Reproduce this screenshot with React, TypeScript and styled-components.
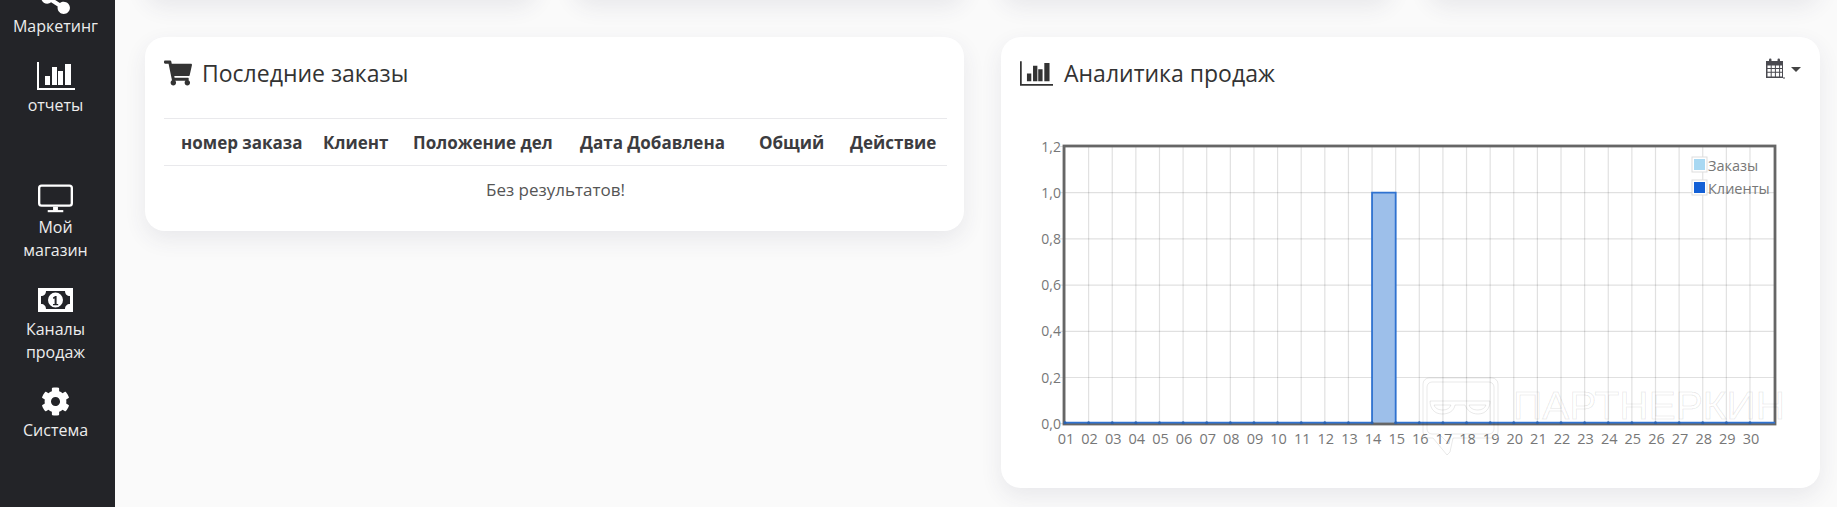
import React from 'react';
import styled, { createGlobalStyle } from 'styled-components';
import { FaCog, FaShareAlt, FaShoppingCart } from 'react-icons/fa';

const GlobalStyle = createGlobalStyle`
  html, body {
    margin: 0;
    padding: 0;
    background: #fafafa;
    font-family: "Open Sans", "Liberation Sans", sans-serif;
  }
`;

const Shell = styled.div`
  position: relative;
  display: flex;
  height: 507px;
  overflow: hidden;
`;

const Sidebar = styled.nav`
  flex: 0 0 115px;
  background: #232428;
`;

const NavList = styled.div`
  display: flex;
  flex-direction: column;
  margin-top: -17px;
  padding-right: 4px;
`;

const NavItem = styled.a<{ $top: number }>`
  display: flex;
  flex-direction: column;
  align-items: center;
  margin-top: ${({ $top }) => $top}px;
  color: #fff;
  font-size: 16px;
  line-height: 22.7px;
  text-align: center;
`;

const NavIcon = styled.span`
  display: flex;
  align-items: center;
  justify-content: center;
  height: 29px;
  margin-bottom: 3px;
  color: #fff;
`;

const NavLabel = styled.span`
  color: #ededed;
`;

const Main = styled.main`
  flex: 1;
  min-width: 0;
  padding: 0 17px 0 30px;
`;

const StatsRow = styled.div`
  display: grid;
  grid-template-columns: repeat(4, 1fr);
  gap: 36px;
  margin-top: -100px;
`;

const Card = styled.section`
  background: #fff;
  border-radius: 20px;
  box-shadow: 0 8px 22px rgba(50, 55, 90, 0.09);
`;

const StatCard = styled(Card)`
  height: 99px;
`;

const PanelRow = styled.div`
  display: grid;
  grid-template-columns: 1fr 1fr;
  gap: 37px;
  align-items: start;
  margin-top: 38px;
`;

const Panel = styled(Card)`
  padding: 19px 17px 19px 19px;
`;

const PanelHeader = styled.header`
  display: flex;
  align-items: center;
  justify-content: space-between;
  height: 34px;
`;

const PanelTitle = styled.h3`
  display: flex;
  align-items: center;
  margin: 0;
  color: #333;
  font-size: 23px;
  font-weight: 400;
`;

const TitleIcon = styled.span<{ $gap: number }>`
  display: flex;
  margin-right: ${({ $gap }) => $gap}px;
  color: #333;
`;

const RangeButton = styled.button`
  display: flex;
  align-items: center;
  align-self: flex-start;
  gap: 6px;
  margin: 2px 2px 0 0;
  padding: 0;
  border: 0;
  background: none;
  color: #4a4a50;
`;

const Caret = styled.span`
  width: 0;
  height: 0;
  margin-top: 2px;
  border-top: 5px solid #444;
  border-left: 5px solid transparent;
  border-right: 5px solid transparent;
`;

const OrdersTable = styled.table`
  width: 100%;
  margin-top: 28px;
  border-collapse: collapse;
  table-layout: fixed;
  font-size: 17px;
  color: #555;
`;

const HeadCell = styled.th<{ $width?: number; $indent?: number }>`
  box-sizing: border-box;
  width: ${({ $width }) => ($width ? `${$width}px` : 'auto')};
  height: 47px;
  padding: 1px 0 0 ${({ $indent }) => $indent ?? 0}px;
  border-top: 1.5px solid #e9e9ec;
  border-bottom: 1.5px solid #e9e9ec;
  color: #3c3c40;
  font-weight: 700;
  text-align: left;
  white-space: nowrap;
`;

const EmptyCell = styled.td`
  box-sizing: border-box;
  height: 46px;
  padding: 2px 0 0;
  text-align: center;
`;

const ChartWrap = styled.div`
  margin-top: 45px;
`;

const ChartSvg = styled.svg`
  display: block;
  font-family: "Open Sans", "Liberation Sans", sans-serif;
`;

const Watermark = styled.svg`
  position: absolute;
  left: 1420px;
  top: 375px;
  pointer-events: none;
`;

const BarChartIcon = ({ width, height }: { width: number; height: number }) => (
  <svg width={width} height={height} viewBox="0 0 38 28" fill="currentColor">
    <path d="M0 0h2v26h36v2H0z" />
    <path d="M8 14h5v9H8zM15 5h5v18h-5zM21 9h5v14h-5zM28 2h6v21h-6z" />
  </svg>
);

const MonitorIcon = () => (
  <svg width="35" height="29" viewBox="0 0 36 29" fill="none" stroke="currentColor">
    <rect x="1.2" y="1.2" width="33.6" height="20.6" rx="2.5" strokeWidth="2.4" />
    <path d="M18 23v4" strokeWidth="5" />
    <path d="M10 27.5h16" strokeWidth="2.2" />
  </svg>
);

const MoneyIcon = () => (
  <svg width="35" height="25" viewBox="0 0 35 25" fill="currentColor">
    <path
      fillRule="evenodd"
      d="M0 0h35v24H0zM8 3c0 3-2 5-5 5v8c3 0 5 2 5 5h19c0-3 2-5 5-5V8c-3 0-5-2-5-5z"
    />
    <path
      fillRule="evenodd"
      d="M17.5 4.500a7.500 7.500 0 1 1 0 15 7.500 7.500 0 0 1 0-15zM15 9.500v1.300l1.600-.4v5.500H15v1.300h5.200v-1.300h-1.600V8h-1.400z"
    />
  </svg>
);

const CalendarIcon = () => (
  <svg width="20" height="21" viewBox="0 0 20 21" fill="currentColor">
    <path
      fillRule="evenodd"
      d="M1 3h17v17H1zM2.500 7.500v2.600h3.200V7.500zM6.700 7.500v2.600h3.200V7.500zM10.900 7.500v2.600h3.200V7.500zM15.100 7.500v2.600h1.900V7.500zM2.500 11.100v2.600h3.200v-2.600zM6.700 11.100v2.600h3.200v-2.600zM10.900 11.100v2.600h3.200v-2.600zM15.100 11.100v2.600h1.900v-2.600zM2.500 14.700v3.800h3.200v-3.800zM6.700 14.700v3.800h3.200v-3.800zM10.900 14.700v3.800h3.200v-3.800zM15.100 14.700v3.800h1.900v-3.800z"
    />
    <rect x="4" y="0.500" width="2.500" height="5" rx="1.200" />
    <rect x="12.500" y="0.500" width="2.500" height="5" rx="1.200" />
    <path d="M18 19.500h2v1h-2z" />
  </svg>
);

const navItems = [
  { top: 0, icon: <FaShareAlt size={33} />, lines: ['Маркетинг'] },
  { top: 24, icon: <BarChartIcon width={38} height={28} />, lines: ['отчеты'] },
  { top: 68, icon: <MonitorIcon />, lines: ['Мой', 'магазин'] },
  { top: 24, icon: <MoneyIcon />, lines: ['Каналы', 'продаж'] },
  { top: 24, icon: <FaCog size={29} />, lines: ['Система'] },
];

const columns = [
  { title: 'номер заказа', width: 159, indent: 17 },
  { title: 'Клиент', width: 90 },
  { title: 'Положение дел', width: 167 },
  { title: 'Дата Добавлена', width: 179 },
  { title: 'Общий', width: 91 },
  { title: 'Действие' },
];

// chart geometry, measured from the svg's own corner
const PLOT = { left: 44, right: 755, top: 11, bottom: 289 };
const X_START = 45;
const X_STEP = 23.62;
const Y_STEP = 46.2;
const days = Array.from({ length: 30 }, (_, i) => String(i + 1).padStart(2, '0'));
const yTicks = ['0,0', '0,2', '0,4', '0,6', '0,8', '1,0', '1,2'];

const dayX = (i: number) => X_START + X_STEP * i;
const tickY = (i: number) => 288.7 - Y_STEP * i;

const SalesChart = () => (
  <ChartSvg width="780" height="334" viewBox="0 0 780 334">
    {days.map((day, i) => (
      <line key={day} x1={dayX(i)} x2={dayX(i)} y1={PLOT.top} y2={PLOT.bottom} stroke="#000" strokeOpacity="0.12" strokeWidth="1.2" />
    ))}
    {yTicks.map((tick, i) => (
      <g key={tick}>
        <line x1={PLOT.left - 4} x2={PLOT.right} y1={tickY(i)} y2={tickY(i)} stroke="#000" strokeOpacity="0.12" strokeWidth="1.2" />
        <text x={PLOT.left - 3} y={tickY(i) + 5} textAnchor="end" fontSize="14" fill="#777">
          {tick}
        </text>
      </g>
    ))}
    <rect x={dayX(13)} y={tickY(5)} width={X_STEP} height={tickY(0) - tickY(5)} fill="#9dbfea" />
    <rect x={PLOT.left} y={PLOT.top} width={PLOT.right - PLOT.left} height={PLOT.bottom - PLOT.top} fill="none" stroke="#666" strokeWidth="2.8" />
    <path
      d={`M${PLOT.left} ${tickY(0) - 1}H${dayX(13)}V${tickY(5)}H${dayX(14)}V${tickY(0) - 1}H${PLOT.right}`}
      fill="none"
      stroke="#2f72d0"
      strokeWidth="1.8"
    />
    {days.map((day, i) => (
      <circle key={day} cx={dayX(i)} cy={tickY(0) - 1} r="1.500" fill="#2a62b0" />
    ))}
    {days.map((day, i) => (
      <text key={day} x={dayX(i) + 1} y="309" textAnchor="middle" fontSize="14.500" fill="#777">
        {day}
      </text>
    ))}
    <rect x="672" y="22" width="15" height="15" fill="#fff" stroke="#ddd" />
    <rect x="674" y="24" width="11" height="11" fill="#a8d8f2" />
    <rect x="672" y="45" width="15" height="15" fill="#fff" stroke="#ddd" />
    <rect x="674" y="47" width="11" height="11" fill="#1360d6" />
    <text x="688" y="36" fontSize="14.500" fill="#777">Заказы</text>
    <text x="688" y="59" fontSize="14.500" fill="#777">Клиенты</text>
  </ChartSvg>
);

const App: React.FC = () => (
  <>
    <GlobalStyle />
    <Shell>
      <Sidebar>
        <NavList>
          {navItems.map((item) => (
            <NavItem key={item.lines[0]} $top={item.top}>
              <NavIcon>{item.icon}</NavIcon>
              {item.lines.map((line) => (
                <NavLabel key={line}>{line}</NavLabel>
              ))}
            </NavItem>
          ))}
        </NavList>
      </Sidebar>
      <Main>
        <StatsRow>
          <StatCard />
          <StatCard />
          <StatCard />
          <StatCard />
        </StatsRow>
        <PanelRow>
          <Panel>
            <PanelHeader>
              <PanelTitle>
                <TitleIcon $gap={10}>
                  <FaShoppingCart size={28} />
                </TitleIcon>
                Последние заказы
              </PanelTitle>
            </PanelHeader>
            <OrdersTable>
              <thead>
                <tr>
                  {columns.map((col) => (
                    <HeadCell key={col.title} $width={col.width} $indent={col.indent}>
                      {col.title}
                    </HeadCell>
                  ))}
                </tr>
              </thead>
              <tbody>
                <tr>
                  <EmptyCell colSpan={6}>Без результатов!</EmptyCell>
                </tr>
              </tbody>
            </OrdersTable>
          </Panel>
          <Panel>
            <PanelHeader>
              <PanelTitle>
                <TitleIcon $gap={11}>
                  <BarChartIcon width={33} height={25} />
                </TitleIcon>
                Аналитика продаж
              </PanelTitle>
              <RangeButton>
                <CalendarIcon />
                <Caret />
              </RangeButton>
            </PanelHeader>
            <ChartWrap>
              <SalesChart />
            </ChartWrap>
          </Panel>
        </PanelRow>
      </Main>
      <Watermark width="370" height="85" viewBox="0 0 370 85" fill="none" stroke="#000" strokeOpacity="0.09">
        <path d="M10 3h62a6 6 0 0 1 6 6v48a6 6 0 0 1-6 6H33l-3 14-3 3-14-17H9a6 6 0 0 1-6-6V9a6 6 0 0 1 6-6z" />
        <path d="M13 7h56a5 5 0 0 1 5 5v42a5 5 0 0 1-5 5H31l-2 10-10-10H12a5 5 0 0 1-5-5V12a5 5 0 0 1 5-5z" />
        <path d="M10 26h60c0 7-4 13-12 13-7 0-11-4-13-9H35c-1 6-6 9-13 9-8 0-12-6-12-13z" />
        <path d="M14 30h17c-1 3-4 5-8 5-5 0-8-2-9-5zM49 30h17c-1 3-4 5-8 5-5 0-8-2-9-5z" />
        <text x="93" y="44" fontFamily="Liberation Sans" fontSize="38" textLength="272" lengthAdjust="spacingAndGlyphs">
          ПАРТНЕРКИН
        </text>
      </Watermark>
    </Shell>
  </>
);

export default App;
